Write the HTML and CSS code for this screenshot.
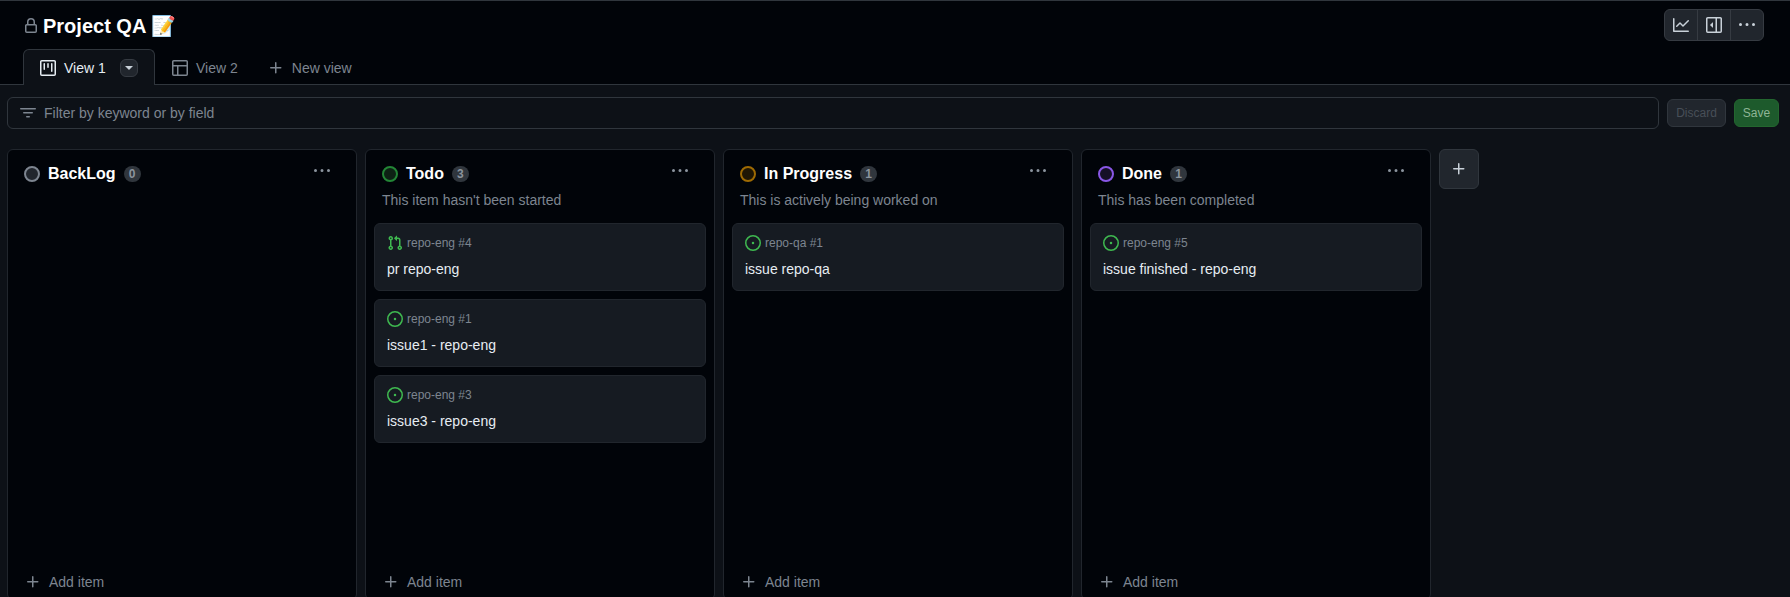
FILE: index.html
```html
<!DOCTYPE html>
<html lang="en">

<head>
    <meta charset="UTF-8">
    <meta name="viewport" content="width=device-width, initial-scale=1.0">
    <title>Project QA</title>
    <link rel="stylesheet" href="styles.css">
</head>

<body>

    <svg class="icon-defs" aria-hidden="true">
        <symbol id="i-lock" viewBox="0 0 16 16"><path d="M4 4a4 4 0 0 1 8 0v2h.25c.966 0 1.75.784 1.75 1.75v5.5A1.75 1.75 0 0 1 12.25 15h-8.5A1.75 1.75 0 0 1 2 13.25v-5.5C2 6.784 2.784 6 3.75 6H4Zm6.5 2V4a2.5 2.5 0 1 0-5 0v2ZM3.75 7.5a.25.25 0 0 0-.25.25v5.5c0 .138.112.25.25.25h8.5a.25.25 0 0 0 .25-.25v-5.5a.25.25 0 0 0-.25-.25Z"/></symbol>
        <symbol id="i-project" viewBox="0 0 16 16"><path d="M1.75 0h12.5C15.216 0 16 .784 16 1.75v12.5A1.75 1.75 0 0 1 14.25 16H1.75A1.75 1.75 0 0 1 0 14.25V1.75C0 .784.784 0 1.75 0ZM1.5 1.75v12.5c0 .138.112.25.25.25h12.5a.25.25 0 0 0 .25-.25V1.75a.25.25 0 0 0-.25-.25H1.75a.25.25 0 0 0-.25.25ZM11.75 3a.75.75 0 0 1 .75.75v7.5a.75.75 0 0 1-1.5 0v-7.5a.75.75 0 0 1 .75-.75Zm-8.25.75a.75.75 0 0 1 1.5 0v5.5a.75.75 0 0 1-1.5 0ZM8 3a.75.75 0 0 1 .75.75v3.5a.75.75 0 0 1-1.5 0v-3.5A.75.75 0 0 1 8 3Z"/></symbol>
        <symbol id="i-table" viewBox="0 0 16 16"><path d="M0 1.75C0 .784.784 0 1.75 0h12.5C15.216 0 16 .784 16 1.75v12.5A1.75 1.75 0 0 1 14.25 16H1.75A1.75 1.75 0 0 1 0 14.25ZM6.5 6.5v8h7.75a.25.25 0 0 0 .25-.25V6.5Zm8-1.5V1.75a.25.25 0 0 0-.25-.25H1.75a.25.25 0 0 0-.25.25V5Zm-13 1.5v7.75c0 .138.112.25.25.25H5v-8Z"/></symbol>
        <symbol id="i-plus" viewBox="0 0 16 16"><path d="M7.75 2a.75.75 0 0 1 .75.75V7h4.25a.75.75 0 0 1 0 1.5H8.5v4.25a.75.75 0 0 1-1.5 0V8.5H2.75a.75.75 0 0 1 0-1.5H7V2.75A.75.75 0 0 1 7.75 2Z"/></symbol>
        <symbol id="i-filter" viewBox="0 0 16 16"><path d="M.75 3h14.5a.75.75 0 0 1 0 1.5H.75a.75.75 0 0 1 0-1.5ZM3 7.75A.75.75 0 0 1 3.75 7h8.5a.75.75 0 0 1 0 1.5h-8.5A.75.75 0 0 1 3 7.75Zm3 4a.75.75 0 0 1 .75-.75h2.5a.75.75 0 0 1 0 1.5h-2.5a.75.75 0 0 1-.75-.75Z"/></symbol>
        <symbol id="i-kebab" viewBox="0 0 16 16"><path d="M8 9a1.5 1.5 0 1 0 0-3 1.5 1.5 0 0 0 0 3ZM1.5 9a1.5 1.5 0 1 0 0-3 1.5 1.5 0 0 0 0 3Zm13 0a1.5 1.5 0 1 0 0-3 1.5 1.5 0 0 0 0 3Z"/></symbol>
        <symbol id="i-graph" viewBox="0 0 16 16"><path d="M1.5 1.75V13.5h13.75a.75.75 0 0 1 0 1.5H.75a.75.75 0 0 1-.75-.75V1.75a.75.75 0 0 1 1.5 0Zm14.28 2.53-5.25 5.25a.75.75 0 0 1-1.06 0L7 7.06 4.28 9.78a.751.751 0 0 1-1.042-.018.751.751 0 0 1-.018-1.042l3.25-3.25a.75.75 0 0 1 1.06 0L10 7.94l4.72-4.72a.751.751 0 0 1 1.042.018.751.751 0 0 1 .018 1.042Z"/></symbol>
        <symbol id="i-sidebar" viewBox="0 0 16 16"><path d="m4.177 7.823 2.396-2.396A.25.25 0 0 1 7 5.604v4.792a.25.25 0 0 1-.427.177L4.177 8.177a.25.25 0 0 1 0-.354Z"/><path d="M0 1.75C0 .784.784 0 1.75 0h12.5C15.216 0 16 .784 16 1.75v12.5A1.75 1.75 0 0 1 14.25 16H1.75A1.75 1.75 0 0 1 0 14.25Zm1.75-.25a.25.25 0 0 0-.25.25v12.5c0 .138.112.25.25.25H9.5v-13Zm12.5 13a.25.25 0 0 0 .25-.25V1.75a.25.25 0 0 0-.25-.25H11v13Z"/></symbol>
        <symbol id="i-issue" viewBox="0 0 16 16"><circle cx="8" cy="8" r="1.25"/><path d="M8 0a8 8 0 1 1 0 16A8 8 0 0 1 8 0ZM1.5 8a6.5 6.5 0 1 0 13 0 6.5 6.5 0 0 0-13 0Z"/></symbol>
        <symbol id="i-pr" viewBox="0 0 16 16"><path d="M1.5 3.25a2.25 2.25 0 1 1 3 2.122v5.256a2.251 2.251 0 1 1-1.5 0V5.372A2.25 2.25 0 0 1 1.5 3.25Zm5.677-.177L9.573.677A.25.25 0 0 1 10 .854V2.5h1A2.5 2.5 0 0 1 13.5 5v5.628a2.251 2.251 0 1 1-1.5 0V5a1 1 0 0 0-1-1h-1v1.646a.25.25 0 0 1-.427.177L7.177 3.427a.25.25 0 0 1 0-.354ZM3.75 2.5a.75.75 0 1 0 0 1.5.75.75 0 0 0 0-1.5Zm0 9.5a.75.75 0 1 0 0 1.5.75.75 0 0 0 0-1.5Zm8.25.75a.75.75 0 1 0 1.5 0 .75.75 0 0 0-1.5 0Z"/></symbol>
    </svg>

    <header class="project-header">
        <div class="title-row">
            <div class="title">
                <svg class="icon lock"><use href="#i-lock"/></svg>
                <h1>Project QA 📝</h1>
            </div>
            <div class="button-group">
                <button class="group-btn"><svg class="icon"><use href="#i-graph"/></svg></button>
                <button class="group-btn"><svg class="icon"><use href="#i-sidebar"/></svg></button>
                <button class="group-btn"><svg class="icon"><use href="#i-kebab"/></svg></button>
            </div>
        </div>
        <nav class="tabs">
            <div class="tab active">
                <svg class="icon"><use href="#i-project"/></svg>
                <span>View 1</span>
                <span class="tab-caret"></span>
            </div>
            <div class="tab">
                <svg class="icon"><use href="#i-table"/></svg>
                <span>View 2</span>
            </div>
            <div class="tab new-view">
                <svg class="icon"><use href="#i-plus"/></svg>
                <span>New view</span>
            </div>
        </nav>
    </header>

    <div class="filter-bar">
        <div class="filter-input">
            <svg class="icon"><use href="#i-filter"/></svg>
            <span>Filter by keyword or by field</span>
        </div>
        <button class="btn-discard">Discard</button>
        <button class="btn-save">Save</button>
    </div>

    <main class="board">
        <section class="column">
            <div class="column-head">
                <span class="status status-gray"></span>
                <h2>BackLog</h2>
                <span class="count">0</span>
                <svg class="icon kebab"><use href="#i-kebab"/></svg>
            </div>
            <div class="cards"></div>
            <div class="add-item"><svg class="icon"><use href="#i-plus"/></svg><span>Add item</span></div>
        </section>

        <section class="column">
            <div class="column-head">
                <span class="status status-green"></span>
                <h2>Todo</h2>
                <span class="count">3</span>
                <svg class="icon kebab"><use href="#i-kebab"/></svg>
            </div>
            <p class="column-desc">This item hasn't been started</p>
            <div class="cards">
                <article class="card">
                    <div class="card-repo"><svg class="icon pr-icon"><use href="#i-pr"/></svg><span>repo-eng #4</span></div>
                    <div class="card-title">pr repo-eng</div>
                </article>
                <article class="card">
                    <div class="card-repo"><svg class="icon issue-icon"><use href="#i-issue"/></svg><span>repo-eng #1</span></div>
                    <div class="card-title">issue1 - repo-eng</div>
                </article>
                <article class="card">
                    <div class="card-repo"><svg class="icon issue-icon"><use href="#i-issue"/></svg><span>repo-eng #3</span></div>
                    <div class="card-title">issue3 - repo-eng</div>
                </article>
            </div>
            <div class="add-item"><svg class="icon"><use href="#i-plus"/></svg><span>Add item</span></div>
        </section>

        <section class="column">
            <div class="column-head">
                <span class="status status-orange"></span>
                <h2>In Progress</h2>
                <span class="count">1</span>
                <svg class="icon kebab"><use href="#i-kebab"/></svg>
            </div>
            <p class="column-desc">This is actively being worked on</p>
            <div class="cards">
                <article class="card">
                    <div class="card-repo"><svg class="icon issue-icon"><use href="#i-issue"/></svg><span>repo-qa #1</span></div>
                    <div class="card-title">issue repo-qa</div>
                </article>
            </div>
            <div class="add-item"><svg class="icon"><use href="#i-plus"/></svg><span>Add item</span></div>
        </section>

        <section class="column">
            <div class="column-head">
                <span class="status status-purple"></span>
                <h2>Done</h2>
                <span class="count">1</span>
                <svg class="icon kebab"><use href="#i-kebab"/></svg>
            </div>
            <p class="column-desc">This has been completed</p>
            <div class="cards">
                <article class="card">
                    <div class="card-repo"><svg class="icon issue-icon"><use href="#i-issue"/></svg><span>repo-eng #5</span></div>
                    <div class="card-title">issue finished - repo-eng</div>
                </article>
            </div>
            <div class="add-item"><svg class="icon"><use href="#i-plus"/></svg><span>Add item</span></div>
        </section>

        <button class="add-column"><svg class="icon"><use href="#i-plus"/></svg></button>
    </main>

</body>

</html>
```

FILE: styles.css
```css
html,
body {
    height: 100%;
}

body {
    font-family: "Liberation Sans", Arial, sans-serif;
    font-size: 14px;
    background-color: #0d1117;
    color: #e6edf3;
    margin: 0;
    overflow: hidden;
    display: flex;
    flex-direction: column;
}

button {
    font-family: inherit;
    padding: 0;
    cursor: pointer;
}

.icon-defs {
    display: none;
}

.icon {
    width: 16px;
    height: 16px;
    fill: currentColor;
    flex: none;
}

/* header */
.project-header {
    background-color: #010409;
    border-top: 1px solid #30363d;
    border-bottom: 1px solid #30363d;
    height: 83px;
    box-sizing: content-box;
    flex: none;
}

.title-row {
    display: flex;
    justify-content: space-between;
    align-items: flex-start;
    height: 48px;
    padding: 8px 26px 0 23px;
    box-sizing: border-box;
}

.title {
    display: flex;
    align-items: center;
    gap: 4px;
    height: 34px;
}

.title h1 {
    font-size: 20px;
    font-weight: bold;
    margin: 0;
    color: #fff;
}

.lock {
    color: #7d8590;
}

.button-group {
    display: flex;
    width: 100px;
    height: 32px;
    background-color: #21262d;
    border: 1px solid #363b42;
    border-radius: 6px;
    box-sizing: border-box;
}

.group-btn {
    flex: 1;
    background: none;
    border: none;
    border-left: 1px solid #363b42;
    color: #c9d1d9;
    display: flex;
    align-items: center;
    justify-content: center;
}

.group-btn:first-child {
    border-left: none;
}

.tabs {
    display: flex;
    height: 35px;
    margin-left: 23px;
}

.tab {
    display: flex;
    align-items: center;
    gap: 8px;
    height: 36px;
    padding: 0 16px;
    color: #7d8590;
    border: 1px solid transparent;
    border-bottom: none;
    border-radius: 6px 6px 0 0;
    box-sizing: border-box;
}

.tab.active {
    width: 132px;
    background-color: #0d1117;
    border-color: #30363d;
    color: #e6edf3;
}

.new-view {
    padding-left: 12px;
}

.tab-caret {
    width: 18px;
    height: 18px;
    margin-left: 6px;
    background-color: #21262d;
    border: 1px solid #363b42;
    border-radius: 6px;
    box-sizing: border-box;
    display: flex;
    align-items: center;
    justify-content: center;
}

.tab-caret::after {
    content: "";
    border-left: 4px solid transparent;
    border-right: 4px solid transparent;
    border-top: 4px solid #c9d1d9;
}

/* filter */
.filter-bar {
    display: flex;
    align-items: center;
    gap: 8px;
    padding: 12px 11px 0 7px;
    flex: none;
}

.filter-input {
    flex: 1;
    height: 32px;
    display: flex;
    align-items: center;
    gap: 8px;
    padding-left: 12px;
    border: 1px solid #30363d;
    border-radius: 6px;
    color: #7d8590;
    box-sizing: border-box;
}

.btn-discard,
.btn-save {
    height: 28px;
    font-size: 12px;
    border-radius: 6px;
}

.btn-discard {
    width: 59px;
    background-color: #21262d;
    border: 1px solid #30363d;
    color: #484f58;
}

.btn-save {
    width: 45px;
    background-color: #1d5a2c;
    border: 1px solid #23662f;
    color: #8fb596;
}

/* board */
.board {
    flex: 1;
    display: flex;
    gap: 8px;
    padding: 20px 0 0 7px;
    min-height: 0;
}

.column {
    width: 350px;
    height: 451px;
    flex: none;
    display: flex;
    flex-direction: column;
    background-color: #010409;
    border: 1px solid #21262d;
    border-radius: 6px;
    box-sizing: border-box;
}

.column-head {
    display: flex;
    align-items: center;
    height: 32px;
    margin-top: 8px;
    padding: 0 16px;
}

.status {
    width: 16px;
    height: 16px;
    border-radius: 50%;
    border: 2px solid;
    box-sizing: border-box;
    flex: none;
    margin-right: 8px;
}

.status-gray {
    border-color: #7d8590;
    background-color: #21262d;
}

.status-green {
    border-color: #238636;
    background-color: #0d2114;
}

.status-orange {
    border-color: #9e6a03;
    background-color: #1f1604;
}

.status-purple {
    border-color: #8957e5;
    background-color: #150f26;
}

.column-head h2 {
    font-size: 16px;
    font-weight: bold;
    margin: 0 8px 0 0;
    color: #fff;
}

.count {
    width: 17px;
    height: 16px;
    border-radius: 8px;
    background-color: #30363d;
    color: #8b949e;
    font-size: 12px;
    font-weight: bold;
    line-height: 16px;
    text-align: center;
}

.kebab {
    margin-left: auto;
    margin-right: 10px;
    margin-top: -6px;
    color: #8b949e;
}

.column-desc {
    margin: 0 16px;
    line-height: 20px;
    color: #7d8590;
}

.cards {
    flex: 1;
    display: flex;
    flex-direction: column;
    gap: 8px;
    padding: 13px 8px 0;
}

.card {
    height: 68px;
    flex: none;
    background-color: #161b22;
    border: 1px solid #21262d;
    border-radius: 6px;
    padding: 10px 12px 0;
    box-sizing: border-box;
}

.card-repo {
    display: flex;
    align-items: center;
    gap: 4px;
    height: 18px;
    font-size: 12px;
    color: #7d8590;
}

.issue-icon,
.pr-icon {
    color: #3fb950;
}

.card-title {
    margin-top: 7px;
    line-height: 20px;
    color: #e6edf3;
}

.add-item {
    display: flex;
    align-items: center;
    gap: 8px;
    height: 32px;
    padding-left: 17px;
    margin-bottom: 1px;
    color: #7d8590;
}

.add-column {
    width: 40px;
    height: 40px;
    flex: none;
    background-color: #21262d;
    border: 1px solid #30363d;
    border-radius: 6px;
    color: #c9d1d9;
    display: flex;
    align-items: center;
    justify-content: center;
}
```
